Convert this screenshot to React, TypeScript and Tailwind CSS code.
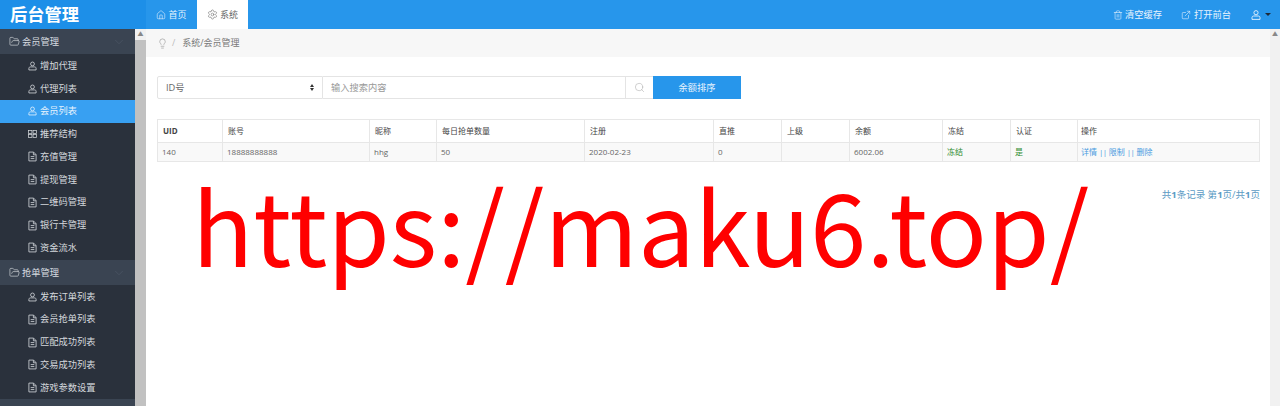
import React from "react";
import { ChevronDown, ExternalLink, FolderOpen, Home, Lightbulb, Search, Settings, Trash2 } from "lucide-react";

const font = "font-['Open_Sans','Noto_Sans_CJK_SC',sans-serif]";

const group1 = [
  { label: "增加代理", icon: "user" },
  { label: "代理列表", icon: "user" },
  { label: "会员列表", icon: "user", active: true },
  { label: "推荐结构", icon: "grid" },
  { label: "充值管理", icon: "file" },
  { label: "提现管理", icon: "file" },
  { label: "二维码管理", icon: "file" },
  { label: "银行卡管理", icon: "file" },
  { label: "资金流水", icon: "file" },
];

const group2 = [
  { label: "发布订单列表", icon: "user" },
  { label: "会员抢单列表", icon: "file" },
  { label: "匹配成功列表", icon: "file" },
  { label: "交易成功列表", icon: "file" },
  { label: "游戏参数设置", icon: "file" },
];

type Item = { label: string; icon: string; active?: boolean };

function UserIcon({ size = 10 }: { size?: number }) {
  return (
    <svg width={size} height={size} viewBox="0 0 10 10" fill="none" stroke="currentColor" strokeWidth="0.9">
      <circle cx="5" cy="2.7" r="2.1" />
      <path d="M1 9.4V7.6C1 6.6 1.8 6 2.7 6h4.6C8.2 6 9 6.6 9 7.6v1.8z" />
    </svg>
  );
}

function FileIcon() {
  return (
    <svg width="10" height="11" viewBox="0 0 10 11" fill="none" stroke="currentColor" strokeWidth="0.9">
      <path d="M1 .6h5.2L9 3.4v7H1z" />
      <path d="M6 .8v2.8h2.8M3 5.6h4M3 7.8h4" />
    </svg>
  );
}

function GridIcon() {
  return (
    <svg width="11" height="10" viewBox="0 0 11 10" fill="none" stroke="currentColor" strokeWidth="0.9">
      <rect x=".6" y=".6" width="4.2" height="3.8" />
      <rect x="6.2" y=".6" width="4.2" height="3.8" />
      <rect x=".6" y="5.6" width="4.2" height="3.8" />
      <rect x="6.2" y="5.6" width="4.2" height="3.8" />
    </svg>
  );
}

function SideItem({ item }: { item: Item }) {
  return (
    <div className={`flex h-[22.75px] items-center gap-[3px] pl-[28px] text-[9.25px] ${item.active ? "bg-[#38a0f2] text-[#e8f3fd]" : "text-[#d4d8dc]"}`}>
      <span className="flex w-[9px] justify-center">
        {item.icon === "user" && <UserIcon />}
        {item.icon === "grid" && <GridIcon />}
        {item.icon === "file" && <FileIcon />}
      </span>
      {item.label}
    </div>
  );
}

function SideHead({ label }: { label: string }) {
  return (
    <div className="flex h-[25px] items-center justify-between bg-[#3a4452] pl-[9px] pr-[9px] text-[9.25px] text-[#d8dce0]">
      <span className="flex items-center gap-[2px]">
        <FolderOpen size={11} strokeWidth={1.4} />
        {label}
      </span>
      <ChevronDown size={14} strokeWidth={1} className="text-[#4f5a69]" />
    </div>
  );
}

const cols = [
  { h: "UID", v: "140", w: "w-[65px]" },
  { h: "账号", v: "18888888888", w: "w-[147px]" },
  { h: "昵称", v: "hhg", w: "w-[67px]" },
  { h: "每日抢单数量", v: "50", w: "w-[148px]" },
  { h: "注册", v: "2020-02-23", w: "w-[129px]" },
  { h: "直推", v: "0", w: "w-[68px]" },
  { h: "上级", v: "", w: "w-[68px]" },
  { h: "余额", v: "6002.06", w: "w-[93px]" },
  { h: "冻结", v: "冻结", w: "w-[68px]", green: true },
  { h: "认证", v: "是", w: "w-[67px]", green: true },
];

export default function App() {
  return (
    <div className={`flex h-[406px] w-[1280px] flex-col overflow-hidden bg-white ${font}`}>
      <header className="flex h-[29px] shrink-0 items-center bg-[#2796eb] text-white">
        <div className="flex h-full w-[146px] items-center bg-[#1d8fe8] pl-[10px] text-[17.25px] font-bold">后台管理</div>
        <div className="flex h-full w-[51px] items-center justify-center gap-[2px] text-[9px] text-[#e8f3fd]">
          <Home size={10} strokeWidth={1.4} />
          首页
        </div>
        <div className="flex h-full w-[51px] items-center justify-center gap-[2px] bg-white text-[9px] text-[#666]">
          <Settings size={11} strokeWidth={1.2} />
          系统
        </div>
        <div className="ml-auto flex items-center pr-[9px] text-[9.25px] text-[#e8f3fd]">
          <Trash2 size={10} strokeWidth={1.4} className="mr-[2px]" />
          <span className="mr-[19px]">清空缓存</span>
          <ExternalLink size={10} strokeWidth={1.4} className="mr-[3px]" />
          <span className="mr-[20px]">打开前台</span>
          <UserIcon size={10} />
          <span className="ml-[4px] h-0 w-0 border-x-[3px] border-t-[3px] border-x-transparent border-t-[#1f2937]" />
        </div>
      </header>

      <div className="flex min-h-0 flex-1">
        <aside className="w-[135px] shrink-0 overflow-hidden bg-[#2a313c]">
          <SideHead label="会员管理" />
          <div className="pb-[1px] pt-[0.5px]">
            {group1.map((item) => (
              <SideItem key={item.label} item={item} />
            ))}
          </div>
          <SideHead label="抢单管理" />
          <div>
            {group2.map((item) => (
              <SideItem key={item.label} item={item} />
            ))}
          </div>
          <div className="h-[25px] bg-[#3a4452]" />
        </aside>

        <div className="flex w-[11px] shrink-0 flex-col bg-[#f1f1f1]">
          <div className="h-[11px] text-center text-[6px] leading-[11px] text-[#888]">▲</div>
          <div className="flex-1 bg-[#c1c1c1]" />
        </div>

        <main className="relative min-w-0 flex-1">
          <div className="flex h-[28px] items-center bg-[#f7f7f7] pl-[11px] text-[9px] text-[#777]">
            <Lightbulb size={11} strokeWidth={1.2} className="text-[#888]" />
            <span className="mr-[4px] pl-[4px] pr-[3px] text-[#bbb]">/</span>
            系统/会员管理
          </div>

          <div className="px-[11px] pt-[19px]">
            <div className="flex h-[23px] items-stretch text-[9.25px]">
              <div className="flex w-[166px] items-center justify-between rounded-l-[2px] border border-[#e4e4e4] px-[8px] text-[#666]">
                ID号
                <span className="flex flex-col gap-[1px]">
                  <span className="h-0 w-0 border-x-[2.5px] border-b-[3px] border-x-transparent border-b-[#333]" />
                  <span className="h-0 w-0 border-x-[2.5px] border-t-[3px] border-x-transparent border-t-[#333]" />
                </span>
              </div>
              <div className="flex w-[303px] items-center border-y border-r border-[#e4e4e4] px-[8px] text-[#999]">输入搜索内容</div>
              <div className="flex w-[27px] items-center justify-center border-y border-[#e4e4e4] text-[#aaa]">
                <Search size={11} strokeWidth={1.2} />
              </div>
              <div className="flex w-[88px] items-center justify-center bg-[#2796eb] text-[#e8f3fd]">余额排序</div>
            </div>

            <table className="mt-[20px] w-[1103px] table-fixed border-collapse border border-[#e7e7e7] text-[8px]">
              <thead>
                <tr className="h-[23px] text-[#444]">
                  {cols.map((c) => (
                    <th key={c.h} className={`${c.w} border border-[#e7e7e7] pl-[5px] text-left ${c.h === "UID" ? "font-bold" : "font-normal"}`}>
                      {c.h}
                    </th>
                  ))}
                  <th className="border border-[#e7e7e7] pl-[3px] text-left font-normal">操作</th>
                </tr>
              </thead>
              <tbody>
                <tr className="h-[19px] bg-[#f9f9f9] text-[#666]">
                  {cols.map((c) => (
                    <td key={c.h} className={`border border-[#e7e7e7] pl-[4px] ${c.green ? "text-[#2e8b2e]" : ""}`}>
                      {c.v}
                    </td>
                  ))}
                  <td className="border border-[#e7e7e7] pl-[3px] text-[#4a9be0]">详情 <span className="tracking-[-0.6px]">||</span> 限制 <span className="tracking-[-0.6px]">||</span> 删除</td>
                </tr>
              </tbody>
            </table>

            <div className="mt-[26px] w-[1103px] text-right text-[9.5px] text-[#5b9bc4]">
              共<b>1</b>条记录 第<b>1</b>页/共<b>1</b>页
            </div>
          </div>

          <div className="absolute left-[46px] top-[144px] whitespace-nowrap font-['Noto_Sans_CJK_SC',sans-serif] text-[101px] leading-none text-[#ff0000]">
            https://maku6.top/
          </div>
        </main>

        <div className="flex w-[10px] shrink-0 flex-col bg-[#f1f1f1]">
          <div className="h-[10px] text-center text-[6px] leading-[10px] text-[#888]">▲</div>
        </div>
      </div>
    </div>
  );
}
